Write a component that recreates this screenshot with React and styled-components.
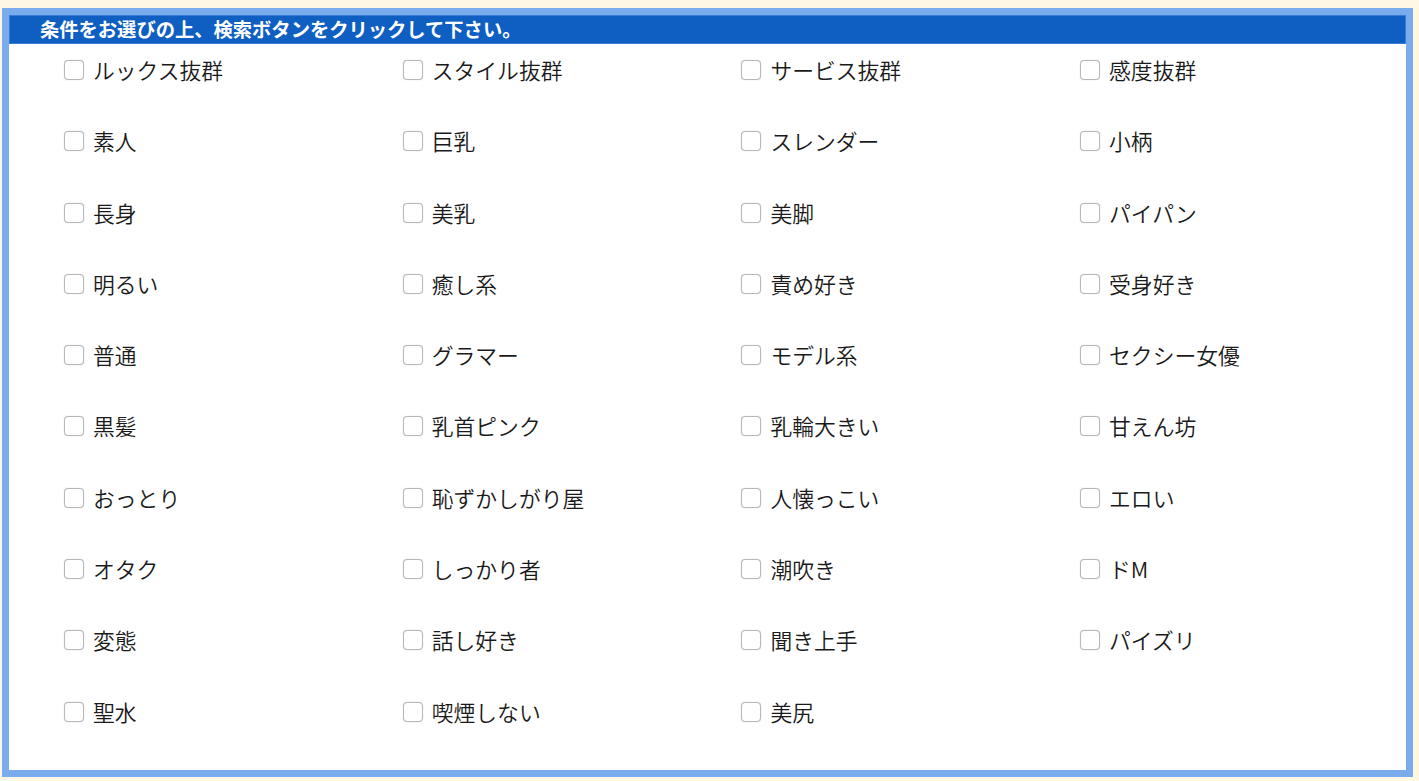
import React from "react"
import styled, { createGlobalStyle } from "styled-components"

const options = [
  "ルックス抜群", "スタイル抜群", "サービス抜群", "感度抜群",
  "素人", "巨乳", "スレンダー", "小柄",
  "長身", "美乳", "美脚", "パイパン",
  "明るい", "癒し系", "責め好き", "受身好き",
  "普通", "グラマー", "モデル系", "セクシー女優",
  "黒髪", "乳首ピンク", "乳輪大きい", "甘えん坊",
  "おっとり", "恥ずかしがり屋", "人懐っこい", "エロい",
  "オタク", "しっかり者", "潮吹き", "ドM",
  "変態", "話し好き", "聞き上手", "パイズリ",
  "聖水", "喫煙しない", "美尻",
]

const App = () => (
  <>
    <GlobalStyle />
    <Panel>
      <Heading>条件をお選びの上、検索ボタンをクリックして下さい。</Heading>
      <Grid>
        {options.map((label) => (
          <Option key={label}>
            <Check type="checkbox" />
            <span>{label}</span>
          </Option>
        ))}
      </Grid>
    </Panel>
  </>
)

export default App

const GlobalStyle = createGlobalStyle`
  html, body {
    margin: 0;
    padding: 0;
    background: #fef7e5;
  }
  body {
    font-family: "Noto Sans CJK JP", "Noto Sans", sans-serif;
    color: #222;
  }
`

const Panel = styled.div`
  box-sizing: border-box;
  width: 1411px;
  margin: 8px 0 0 2px;
  border: 7px solid #7aabec;
  background: #fff;
`

const Heading = styled.div`
  box-sizing: border-box;
  height: 29px;
  padding-left: 30px;
  background: #0f5fc2;
  border: 1px solid #3a7bd4;
  color: #fff;
  font-size: 19.3px;
  font-weight: 700;
  line-height: 27px;
  white-space: nowrap;
`

const Grid = styled.div`
  display: grid;
  grid-template-columns: repeat(4, 338.7px);
  row-gap: 49.3px;
  padding: 15px 0 47px 55px;
`

const Option = styled.label`
  display: flex;
  align-items: center;
  height: 22px;
  font-size: 21.8px;
  font-weight: 350;
  line-height: 22px;
  color: #1a1a1a;
  white-space: nowrap;
`

const Check = styled.input`
  appearance: none;
  box-sizing: border-box;
  width: 20px;
  height: 20px;
  margin: 0 9px 0 0;
  border: 1px solid #b8b8b8;
  border-radius: 4px;
  background: #fff;
  box-shadow: 0 0 1px rgba(0, 0, 0, 0.25);
  flex-shrink: 0;
`
